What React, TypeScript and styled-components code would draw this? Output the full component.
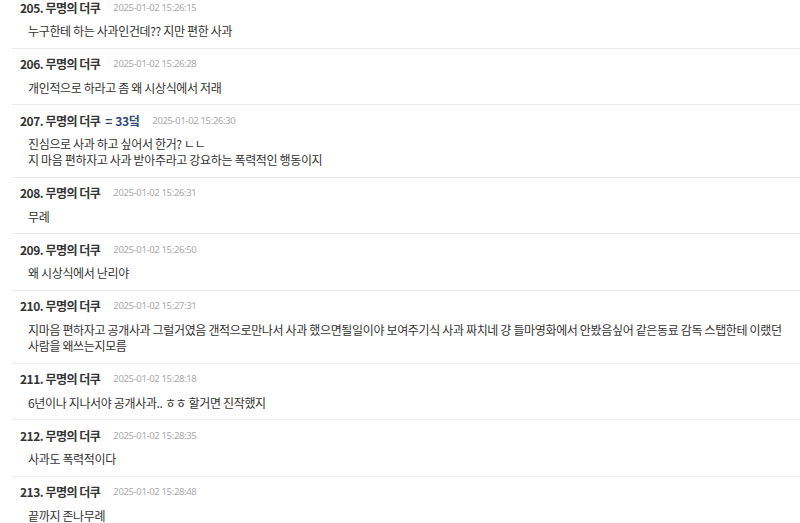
import React from "react";
import styled, { createGlobalStyle } from "styled-components";

const Global = createGlobalStyle`
  html, body { margin: 0; padding: 0; background: #fff; }
  body { font-family: "Noto Sans CJK KR", "Noto Sans", sans-serif; overflow: hidden; }
`;

type Comment = { no: number; user: string; mark?: string; date: string; lines: string[] };

const comments: Comment[] = [
  { no: 205, user: "무명의 더쿠", date: "2025-01-02 15:26:15", lines: ["누구한테 하는 사과인건데?? 지만 편한 사과"] },
  { no: 206, user: "무명의 더쿠", date: "2025-01-02 15:26:28", lines: ["개인적으로 하라고 좀 왜 시상식에서 저래"] },
  { no: 207, user: "무명의 더쿠", mark: "= 33덬", date: "2025-01-02 15:26:30", lines: ["진심으로 사과 하고 싶어서 한거? ㄴㄴ", "지 마음 편하자고 사과 받아주라고 강요하는 폭력적인 행동이지"] },
  { no: 208, user: "무명의 더쿠", date: "2025-01-02 15:26:31", lines: ["무례"] },
  { no: 209, user: "무명의 더쿠", date: "2025-01-02 15:26:50", lines: ["왜 시상식에서 난리야"] },
  { no: 210, user: "무명의 더쿠", date: "2025-01-02 15:27:31", lines: ["지마음 편하자고 공개사과 그럴거였음 갠적으로만나서 사과 했으면될일이야 보여주기식 사과 짜치네 걍 들마영화에서 안봤음싶어 같은동료 감독 스탭한테 이랬던", "사람을 왜쓰는지모름"] },
  { no: 211, user: "무명의 더쿠", date: "2025-01-02 15:28:18", lines: ["6년이나 지나서야 공개사과.. ㅎㅎ 할거면 진작했지"] },
  { no: 212, user: "무명의 더쿠", date: "2025-01-02 15:28:35", lines: ["사과도 폭력적이다"] },
  { no: 213, user: "무명의 더쿠", date: "2025-01-02 15:28:48", lines: ["끝까지 존나무례"] },
];

const List = styled.ul`
  list-style: none;
  margin: -9px 0 0 0;
  padding: 0 0 0 12px;
`;

const Item = styled.li<{ $first?: boolean }>`
  border-top: 1px solid ${(p) => (p.$first ? "transparent" : "#ebebeb")};
  padding: 6px 0 8.6px 8px;
`;

const Header = styled.div`
  display: flex;
  align-items: center;
  height: 18px;
  gap: 5px;
`;

const Name = styled.span`
  font-size: 12px;
  font-weight: 700;
  color: #333;
  letter-spacing: -0.5px;
`;

const Mark = styled.span`
  font-size: 12px;
  font-weight: 700;
  color: #2d4a7a;
  letter-spacing: -0.4px;
  word-spacing: 1px;
`;

const DateText = styled.span`
  margin-left: 8px;
  font-family: "Noto Sans", sans-serif;
  font-size: 9.5px;
  color: #a9a9a9;
  letter-spacing: -0.35px;
`;

const Body = styled.div`
  margin-top: 7px;
  padding: 0 0 0 8px;
  font-size: 12px;
  line-height: 16px;
  color: #333;
  letter-spacing: -0.35px;
  white-space: nowrap;
`;

export default function App() {
  return (
    <>
      <Global />
      <List>
        {comments.map((c, i) => (
          <Item key={c.no} $first={i === 0}>
            <Header>
              <Name>{c.no}. {c.user}</Name>
              {c.mark && <Mark>{c.mark}</Mark>}
              <DateText>{c.date}</DateText>
            </Header>
            <Body>
              {c.lines.map((l, j) => (
                <div key={j}>{l}</div>
              ))}
            </Body>
          </Item>
        ))}
      </List>
    </>
  );
}
